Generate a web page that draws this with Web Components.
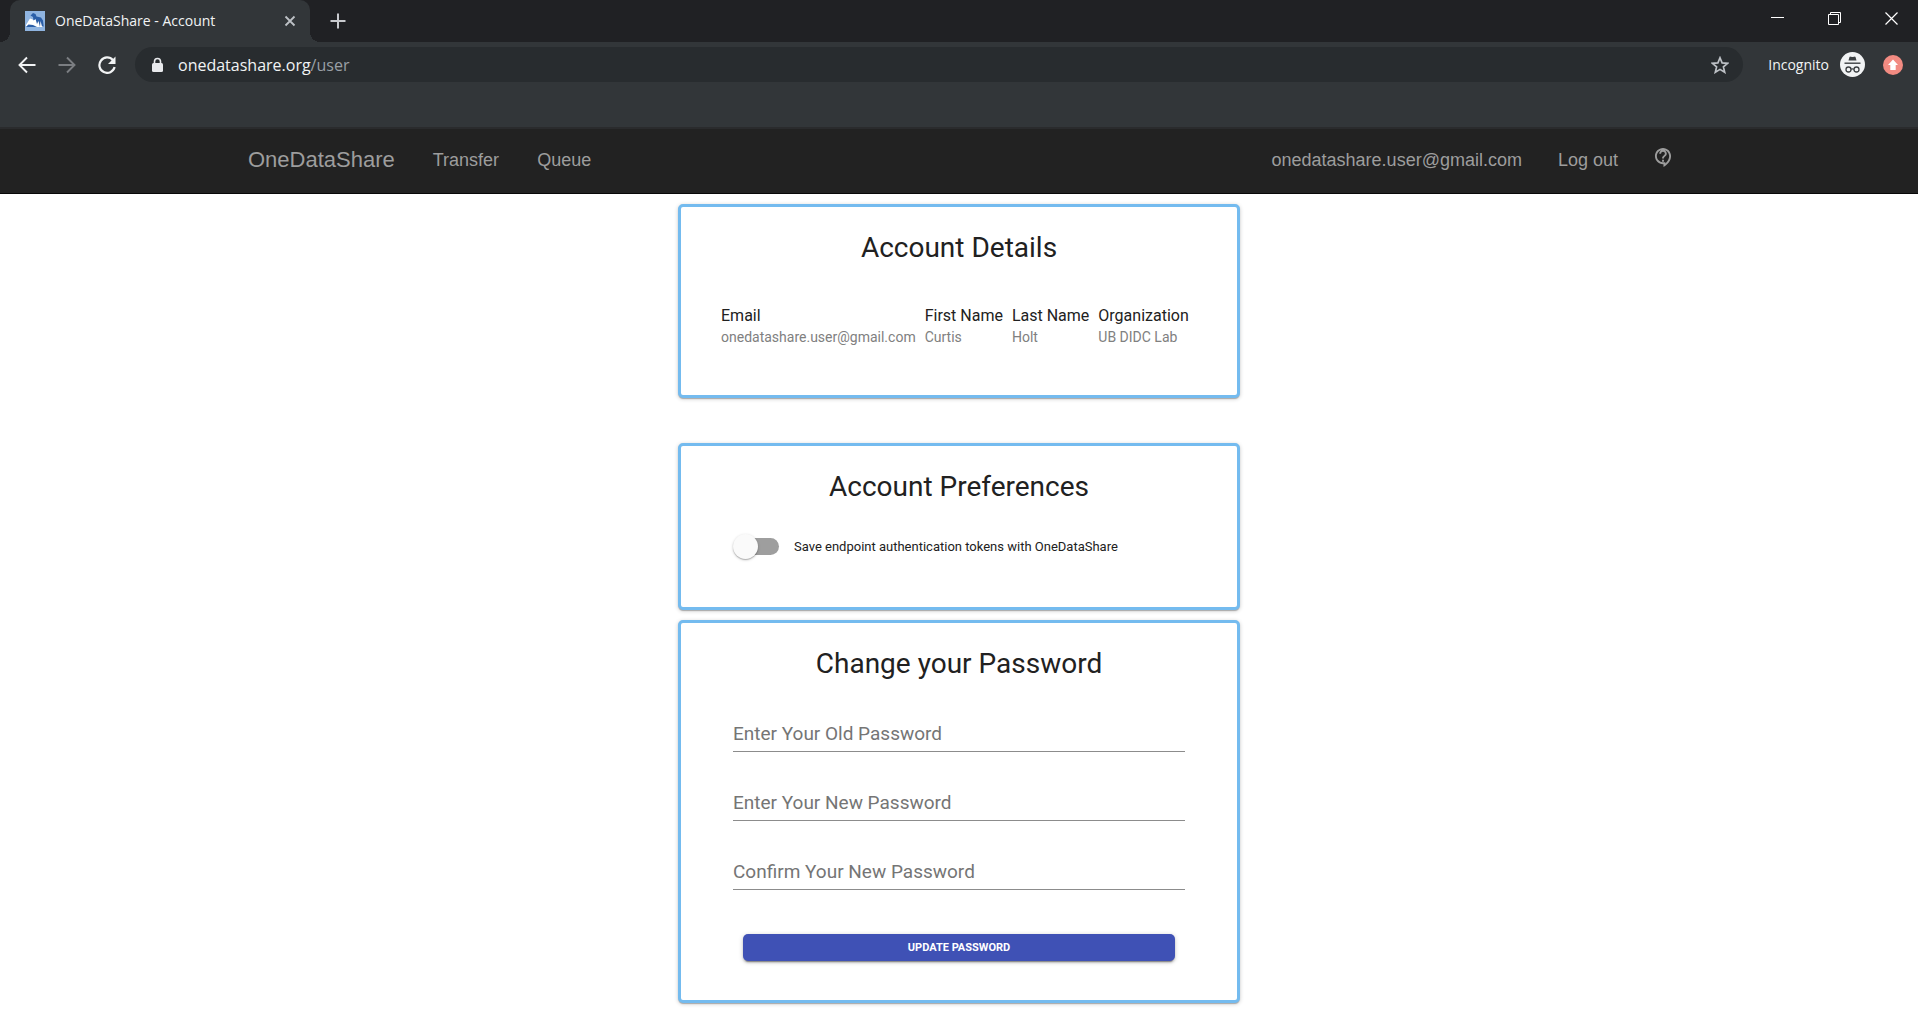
<!DOCTYPE html>
<html lang="en">
<head>
<meta charset="utf-8">
<title>OneDataShare - Account</title>
<style>
  body { margin: 0; background: #fff; font-family: Roboto, "Liberation Sans", sans-serif; color: #212121; }
</style>
</head>
<body>
<browser-chrome page-title="OneDataShare - Account" host="onedatashare.org" path="/user"></browser-chrome>
<ods-navbar>
  <ods-nav-link brand href="#home">OneDataShare</ods-nav-link>
  <ods-nav-link href="#transfer">Transfer</ods-nav-link>
  <ods-nav-link href="#queue">Queue</ods-nav-link>
  <ods-nav-link slot="end" href="#user">onedatashare.user@gmail.com</ods-nav-link>
  <ods-nav-link slot="end" href="#logout">Log out</ods-nav-link>
  <ods-nav-link slot="end" href="#support" label="Support"><ods-help-icon></ods-help-icon></ods-nav-link>
</ods-navbar>
<ods-account-page></ods-account-page>

<script>
const define = (name, html, setup) => {
  const template = document.createElement('template');
  template.innerHTML = html;
  customElements.define(name, class extends HTMLElement {
    constructor() {
      super();
      this.attachShadow({ mode: 'open' }).append(template.content.cloneNode(true));
    }
    connectedCallback() {
      if (setup && !this.ready) { this.ready = true; setup(this, this.shadowRoot); }
    }
  });
};

/* ---------- browser window ---------- */
define('browser-chrome', `
<style>
  :host { display: block; font-family: "Open Sans", "Noto Sans", sans-serif; color: #f1f3f4; background: #323639; }
  button { all: unset; display: flex; align-items: center; justify-content: center; box-sizing: border-box; }
  svg { display: block; }
  .strip { display: flex; height: 42px; background: #202124; padding-left: 10px; }
  .tab { display: flex; align-items: center; box-sizing: border-box; width: 300px; padding: 0 14px 0 15px; background: #323639;
         border-radius: 10px 10px 0 0; font-size: 14px; line-height: 20px; }
  .tab span { flex: 1; margin-left: 10px; white-space: nowrap; }
  .flare { align-self: flex-end; width: 10px; height: 10px; background: radial-gradient(circle at 100% 0, transparent 10px, #323639 10px); }
  .flare.left { margin-left: -10px; background: radial-gradient(circle at 0 0, transparent 10px, #323639 10px); }
  .new { margin-left: 2px; width: 32px; }
  .window { display: flex; margin-left: auto; }
  .window button { width: 57px; height: 37px; padding-left: 4px; }
  .toolbar { display: flex; align-items: center; height: 45px; padding: 0 15px 0 7px; }
  .toolbar > button { width: 40px; height: 36px; }
  .omnibox { display: flex; align-items: center; flex: 1; height: 35px; box-sizing: border-box; margin-left: 8px; padding: 0 14px 0 16px;
             border-radius: 18px; background: #282c2f; font-size: 16px; line-height: 24px; }
  .omnibox p { flex: 1; margin: 0 0 0 14px; }
  .omnibox p span { color: #9aa0a6; }
  .incognito { display: flex; align-items: center; gap: 11px; margin: 0 18px 0 25px; font-size: 14px; line-height: 20px; }
  .bookmarks { height: 40px; border-bottom: 2px solid #2a2b2d; }
</style>
<div class="strip">
  <i class="flare left"></i>
  <div class="tab">
    <svg width="20" height="20" viewBox="0 0 20 20"><rect width="20" height="20" fill="#8fb4e0"/><path d="M1 14 5 7.500 9 9l3-2.500 4 2 2 6v1.500H1z" fill="#fff"/><path d="M5.500 4.500 8 2l2.500 1 1 2.500 4.500 1 2 3 .7 6h-1.700l-1.500-5.500L15 16l-1.500-6-1.500 3-1.500-5-2 1.500L8 6zM.8 16l2.700-2.500 4.500.5 4 2z" fill="#2b5fa8"/></svg>
    <span id="title"></span>
    <button aria-label="Close tab"><svg width="12" height="12" viewBox="0 0 12 12"><path d="m1.500 1.500 9 9m0-9-9 9" stroke="#bdc1c6" stroke-width="1.800"/></svg></button>
  </div>
  <i class="flare right"></i>
  <button class="new" aria-label="New tab"><svg width="16" height="16" viewBox="0 0 16 16"><path d="M8 .5v15M.5 8h15" stroke="#c8cace" stroke-width="2"/></svg></button>
  <div class="window">
    <button aria-label="Minimize"><svg width="13" height="13" viewBox="0 0 13 13"><path d="M0 5.500h13" stroke="#fff"/></svg></button>
    <button aria-label="Restore"><svg width="13" height="13" viewBox="0 0 13 13" fill="none" stroke="#fff"><path d="M.5 2.500h10v10H.5zM2.500 2.500v-2h10v10h-2"/></svg></button>
    <button aria-label="Close"><svg width="13" height="13" viewBox="0 0 13 13"><path d="m.5.500 12 12m0-12-12 12" stroke="#fff" stroke-width="1.200"/></svg></button>
  </div>
</div>
<div class="toolbar">
  <button aria-label="Back"><svg width="18" height="18" viewBox="0 0 18 18" fill="none" stroke="#f1f3f4" stroke-width="1.900"><path d="M17.500 9H2M9 1.500 1.500 9 9 16.500"/></svg></button>
  <button aria-label="Forward"><svg width="18" height="18" viewBox="0 0 18 18" fill="none" stroke="#7b7e82" stroke-width="1.900"><path d="M.5 9H16M9 1.500 16.500 9 9 16.500"/></svg></button>
  <button aria-label="Reload"><svg width="18" height="18" viewBox="0 0 18 18"><path d="M15 4.200A7.700 7.700 0 1 0 16.600 11" fill="none" stroke="#f1f3f4" stroke-width="2.200"/><path d="M17.500.5v7.500H10z" fill="#f1f3f4"/></svg></button>
  <div class="omnibox">
    <svg width="13" height="16" viewBox="0 0 13 16"><rect x="1" y="6" width="11" height="9" rx="1.500" fill="#e8eaed"/><path d="M3.500 6.500V4.500a3 3 0 0 1 6 0v2" fill="none" stroke="#e8eaed" stroke-width="1.600"/></svg>
    <p><b style="font-weight:400" id="host"></b><span id="path"></span></p>
    <button aria-label="Bookmark"><svg width="18" height="18" viewBox="0 0 18 18"><path d="m9 1.800 2.100 5.100 5.500.4-4.200 3.600 1.300 5.400L9 13.400l-4.700 2.900 1.300-5.400L1.400 7.300l5.500-.4z" fill="none" stroke="#bdc1c6" stroke-width="1.700"/></svg></button>
  </div>
  <div class="incognito">Incognito
    <svg width="25" height="25" viewBox="0 0 25 25"><circle cx="12.500" cy="12.500" r="12.500" fill="#f1f3f4"/><g fill="#3c4043"><path d="m8.500 8.500.9-3.300q.4-.8 1.200-.5l1.900.4 1.900-.4q.8-.3 1.200.5l.9 3.300z"/><path d="M4.500 10.500h16v1.400h-16z"/></g><g fill="none" stroke="#3c4043" stroke-width="1.300"><circle cx="8.500" cy="17.500" r="2.500"/><circle cx="16.500" cy="17.500" r="2.500"/><path d="M11 17.300q1.500-1 3 0"/></g></svg>
  </div>
  <svg width="20" height="20" viewBox="0 0 20 20"><circle cx="10" cy="10" r="10" fill="#f28b82"/><path d="M10 4.500 15 10h-2.300v5H7.300v-5H5z" fill="#fff"/></svg>
</div>
<div class="bookmarks"></div>
`, (el, root) => {
  root.getElementById('title').textContent = el.getAttribute('page-title');
  root.getElementById('host').textContent = el.getAttribute('host');
  root.getElementById('path').textContent = el.getAttribute('path');
});

/* ---------- site navigation ---------- */
define('ods-navbar', `
<style>
  :host { display: block; background: #222; border-bottom: 1px solid #080808; }
  nav { display: flex; justify-content: space-between; align-items: center; box-sizing: border-box; max-width: 1462px; height: 64px;
        margin: 0 auto; padding: 0 18px 2px 20px; font-family: "Liberation Sans", Arial, sans-serif; }
  div { display: flex; align-items: center; gap: 38px; }
  .end { gap: 36px; }
</style>
<nav><div><slot></slot></div><div class="end"><slot name="end"></slot></div></nav>
`);

define('ods-nav-link', `
<style>
  :host { display: block; font-size: 18px; line-height: 24px; }
  :host([brand]) { font-size: 22px; }
  a { color: #9d9d9d; text-decoration: none; }
</style>
<a><slot></slot></a>
`, (el, root) => {
  const a = root.querySelector('a');
  a.href = el.getAttribute('href');
  if (el.hasAttribute('label')) a.setAttribute('aria-label', el.getAttribute('label'));
});

define('ods-help-icon', `
<style>:host { display: block; margin-bottom: 5px; } svg { display: block; }</style>
<svg width="18" height="19" viewBox="2 2 19 20" fill="#9d9d9d"><path d="M11.500 2C6.810 2 3 5.810 3 10.500S6.810 19 11.500 19h.5v3c4.860-2.340 8-7 8-11.500C20 5.810 16.190 2 11.500 2zm2.500 16.300V17h-2.500C7.910 17 5 14.090 5 10.500S7.910 4 11.500 4 18 6.910 18 10.500c0 2.700-1.500 5.700-4 7.800zM10.500 14.500h2v2h-2zm2-1.500h-2c0-3.250 3-3 3-5 0-1.100-.9-2-2-2s-2 .9-2 2h-2c0-2.210 1.790-4 4-4s4 1.790 4 4c0 2.500-3 2.750-3 5z"/></svg>
`);

/* ---------- building blocks ---------- */
define('ods-card', `
<style>
  :host { display: block; box-sizing: border-box; padding: 23px 40px 48px; border: 3px solid #74bbef; border-radius: 5px; background: #fff;
          box-shadow: 0 1px 4px rgba(0,0,0,.2), 0 1px 1px rgba(0,0,0,.14), 0 2px 1px -1px rgba(0,0,0,.12); }
  h2 { margin: 0 0 39px; font-size: 28px; line-height: 36px; font-weight: 400; text-align: center; }
</style>
<h2></h2>
<slot></slot>
`, (el, root) => { root.querySelector('h2').textContent = el.getAttribute('heading'); });

define('ods-details', `
<style>
  :host { display: block; }
  table { border-collapse: collapse; text-align: left; white-space: nowrap; }
  th, td { padding: 0 9px 0 0; }
  th { font-size: 16px; line-height: 22px; font-weight: 400; }
  td { font-size: 14px; line-height: 20px; color: #808080; }
</style>
<table>
  <thead><tr><th>Email</th><th>First Name</th><th>Last Name</th><th>Organization</th></tr></thead>
  <tbody><tr><td>onedatashare.user@gmail.com</td><td>Curtis</td><td>Holt</td><td>UB DIDC Lab</td></tr></tbody>
</table>
`);

define('ods-switch', `
<style>
  :host { display: block; }
  label { display: flex; align-items: center; gap: 15px; font-size: 13px; line-height: 20px; }
  input { appearance: none; display: grid; align-items: center; width: 46px; height: 25px; margin: 0; }
  input::before, input::after { content: ""; grid-area: 1 / 1; }
  input::before { justify-self: end; width: 42px; height: 17px; border-radius: 9px; background: #9e9e9e; }
  input::after { width: 25px; height: 25px; border-radius: 50%; background: #fafafa;
          box-shadow: 0 1px 3px rgba(0,0,0,.2), 0 1px 1px rgba(0,0,0,.2); }
  input:checked::after { justify-self: end; background: #3f51b5; }
</style>
<label><input type="checkbox" role="switch"><span><slot></slot></span></label>
`);

define('ods-password-field', `
<style>
  :host { display: grid; border-bottom: 1px solid #8c8c8c; padding-bottom: 5px; font-size: 19px; line-height: 24px; }
  label, input { grid-area: 1 / 1; }
  label { color: #757575; pointer-events: none; }
  input { min-width: 0; height: 24px; padding: 0; border: 0; outline: 0; background: none; font: inherit; }
  input:not(:placeholder-shown) + label { visibility: hidden; }
</style>
<input id="field" type="password" placeholder=" "><label for="field"><slot></slot></label>
`);

define('ods-button', `
<style>
  :host { display: block; }
  button { display: block; width: 100%; height: 27px; padding: 0; border: 0; border-radius: 5px; background: #3f51b5; color: #fff;
           font: 700 11px/16px Roboto, sans-serif; text-transform: uppercase;
           box-shadow: 0 1px 5px rgba(0,0,0,.2), 0 2px 2px rgba(0,0,0,.14), 0 3px 1px -2px rgba(0,0,0,.3); }
</style>
<button type="submit"><slot></slot></button>
`);

/* ---------- account page ---------- */
define('ods-account-page', `
<style>
  :host { display: block; }
  main { display: flex; flex-direction: column; max-width: 562px; margin: 0 auto; padding: 10px 0 20px; }
  .details { margin-bottom: 45px; }
  .preferences { margin-bottom: 10px; }
  .password { padding-bottom: 39px; }
  ods-switch { margin: -10px 12px 0; }
  form { display: flex; flex-direction: column; gap: 39px; padding: 1px 12px 0; }
  ods-button { margin: 5px 10px 0; }
</style>
<main>
  <ods-card class="details" heading="Account Details"><ods-details></ods-details></ods-card>
  <ods-card class="preferences" heading="Account Preferences"><ods-switch>Save endpoint authentication tokens with OneDataShare</ods-switch></ods-card>
  <ods-card class="password" heading="Change your Password">
    <form>
      <ods-password-field>Enter Your Old Password</ods-password-field>
      <ods-password-field>Enter Your New Password</ods-password-field>
      <ods-password-field>Confirm Your New Password</ods-password-field>
      <ods-button>Update Password</ods-button>
    </form>
  </ods-card>
</main>
`);
</script>
</body>
</html>
